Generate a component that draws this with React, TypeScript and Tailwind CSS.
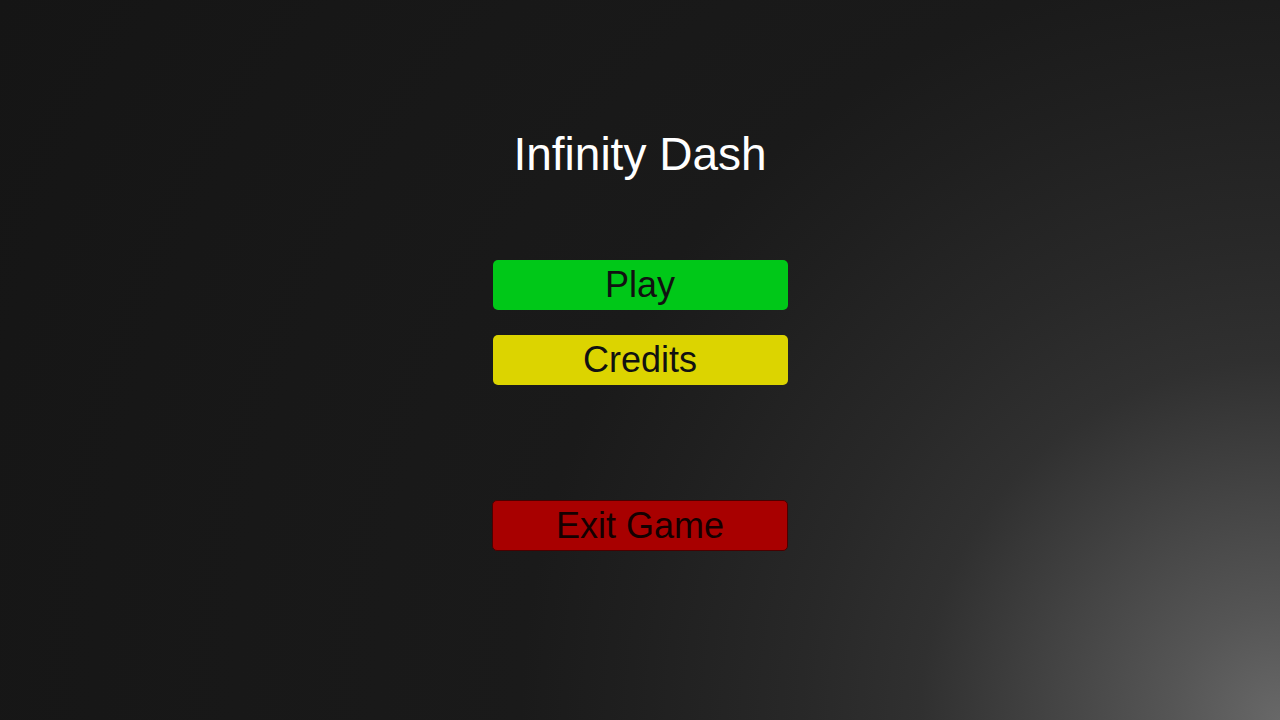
export default function App() {
  return (
    <div
      className="flex h-[720px] w-[1280px] flex-col items-center overflow-hidden bg-[radial-gradient(circle_at_100%_100%,#686868_0px,#555555_110px,#454545_220px,#303030_360px,#282828_480px,#1f1f1f_650px,#1a1a1a_760px,#151515_1470px)] font-['Liberation_Sans',Arial,sans-serif]"
    >
      <h1 className="mt-[131px] text-[46px] leading-[46px] text-white">Infinity Dash</h1>

      <div className="mt-[83px] flex flex-col gap-[25px]">
        <button className="flex h-[50px] w-[295px] items-center justify-center rounded-[5px] bg-[#00c818] text-[36px] text-[#111]">
          Play
        </button>
        <button className="flex h-[50px] w-[295px] items-center justify-center rounded-[5px] bg-[#dcd400] text-[36px] text-[#111]">
          Credits
        </button>
      </div>

      <button className="mt-[115px] flex h-[51px] w-[296px] items-center justify-center rounded-[5px] border border-[#4a0000] bg-[#a80000] text-[36px] text-[#140000]">
        Exit Game
      </button>
    </div>
  );
}
